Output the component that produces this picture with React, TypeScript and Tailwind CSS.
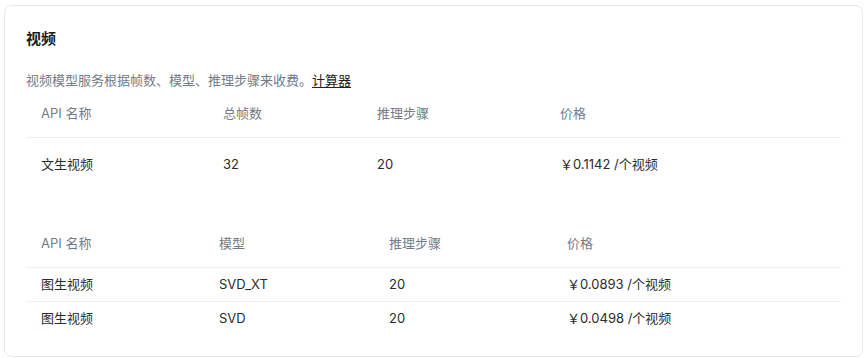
import React from "react";

const videoRows = [{ name: "文生视频", frames: "32", steps: "20", price: "￥0.1142 /个视频" }];

const imageRows = [
  { name: "图生视频", model: "SVD_XT", steps: "20", price: "￥0.0893 /个视频" },
  { name: "图生视频", model: "SVD", steps: "20", price: "￥0.0498 /个视频" },
];

export default function App() {
  return (
    <div className="min-h-[358px] bg-white pt-[5px] pl-[4px] font-['Inter','Noto_Sans_CJK_SC',sans-serif]">
      <div className="w-[859px] h-[352px] rounded-lg border border-[#e6e8eb] px-[21px] pt-[22px] pb-[21px]">
        {/* Title */}
        <h2 className="text-[15px] leading-[22px] font-bold text-[#1a1a1a]">视频</h2>

        {/* Description */}
        <p className="mt-[20px] text-[13px] leading-[20px] text-[#737b87]">
          视频模型服务根据帧数、模型、推理步骤来收费。
          <a href="#" className="text-[#222] underline underline-offset-2">
            计算器
          </a>
        </p>

        {/* Text to video */}
        <div className="text-[13px]">
          <div className="grid grid-cols-[182px_154px_183px_1fr] h-[48px] items-center border-b border-[#eceef0] text-[#737b87]">
            <div className="pl-[15px]">API 名称</div>
            <div className="pl-[15px]">总帧数</div>
            <div className="pl-[15px]">推理步骤</div>
            <div className="pl-[15px]">价格</div>
          </div>
          {videoRows.map((row) => (
            <div
              key={row.name}
              className="grid grid-cols-[182px_154px_183px_1fr] h-[53px] items-center text-[#2b2b2b]"
            >
              <div className="pl-[15px]">{row.name}</div>
              <div className="pl-[15px]">{row.frames}</div>
              <div className="pl-[15px]">{row.steps}</div>
              <div className="pl-[15px]">{row.price}</div>
            </div>
          ))}
        </div>

        {/* Image to video */}
        <div className="mt-[29px] text-[13px]">
          <div className="grid grid-cols-[178px_170px_178px_1fr] h-[48px] items-center border-b border-[#eceef0] text-[#737b87]">
            <div className="pl-[15px]">API 名称</div>
            <div className="pl-[15px]">模型</div>
            <div className="pl-[15px]">推理步骤</div>
            <div className="pl-[15px]">价格</div>
          </div>
          {imageRows.map((row, i) => (
            <div
              key={row.model}
              className={
                i < imageRows.length - 1
                  ? "grid grid-cols-[178px_170px_178px_1fr] h-[34px] items-center border-b border-[#eceef0] text-[#2b2b2b]"
                  : "grid grid-cols-[178px_170px_178px_1fr] h-[34px] items-center text-[#2b2b2b]"
              }
            >
              <div className="pl-[15px]">{row.name}</div>
              <div className="pl-[15px]">{row.model}</div>
              <div className="pl-[15px]">{row.steps}</div>
              <div className="pl-[15px]">{row.price}</div>
            </div>
          ))}
        </div>
      </div>
    </div>
  );
}
